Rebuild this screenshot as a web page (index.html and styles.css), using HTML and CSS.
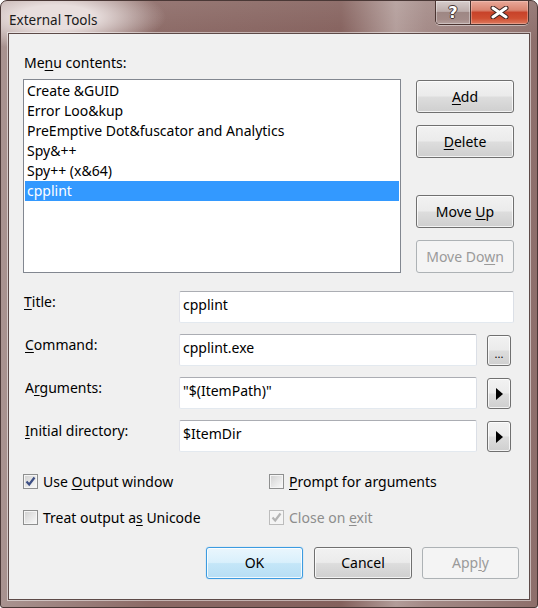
FILE: index.html
```html
<!DOCTYPE html>
<html>
<head>
<meta charset="utf-8">
<link rel="stylesheet" href="styles.css">
</head>
<body>
<div class="window">
  <div class="titlebar">
    <div class="title">External Tools</div>
    <div class="caption">
      <div class="cap help"><span class="qmark">?</span></div>
      <div class="cap close">
        <svg width="19" height="13" viewBox="0 0 19 13">
          <path d="M3 2 L16 11 M16 2 L3 11" stroke="#3a2422" stroke-width="5" stroke-linecap="round"/>
          <path d="M3 2 L16 11 M16 2 L3 11" stroke="#ffffff" stroke-width="3" stroke-linecap="round"/>
        </svg>
      </div>
    </div>
  </div>
  <div class="client">
    <div class="lbl menu-lbl">Me<u>n</u>u contents:</div>
    <div class="top">
      <ul class="listbox">
        <li>Create &amp;GUID</li>
        <li>Error Loo&amp;kup</li>
        <li>PreEmptive Dot&amp;fuscator and Analytics</li>
        <li>Spy&amp;++</li>
        <li>Spy++ (x&amp;64)</li>
        <li class="sel">cpplint</li>
      </ul>
      <div class="side">
        <div class="btn side-btn"><span><u>A</u>dd</span></div>
        <div class="btn side-btn gap-s"><span><u>D</u>elete</span></div>
        <div class="btn side-btn gap-l"><span>Move <u>U</u>p</span></div>
        <div class="btn side-btn gap-s disabled"><span>Move Do<u>w</u>n</span></div>
      </div>
    </div>
    <div class="fields">
      <div class="row">
        <div class="flabel first"><u>T</u>itle:</div>
        <div class="input">cpplint</div>
      </div>
      <div class="row">
        <div class="flabel"><u>C</u>ommand:</div>
        <div class="input">cpplint.exe</div>
        <div class="btn mini"><span class="dots">...</span></div>
      </div>
      <div class="row">
        <div class="flabel">A<u>r</u>guments:</div>
        <div class="input">"$(ItemPath)"</div>
        <div class="btn mini">
          <svg width="7" height="12" viewBox="0 0 7 12"><polygon points="0,0 7,6 0,12" fill="#000"/></svg>
        </div>
      </div>
      <div class="row">
        <div class="flabel"><u>I</u>nitial directory:</div>
        <div class="input">$ItemDir</div>
        <div class="btn mini">
          <svg width="7" height="12" viewBox="0 0 7 12"><polygon points="0,0 7,6 0,12" fill="#000"/></svg>
        </div>
      </div>
    </div>
    <div class="checks">
      <div class="check">
        <div class="cb"><svg width="13" height="13" viewBox="0 0 13 13"><polyline points="2.5,6.5 5.2,9.5 10.5,2.5" fill="none" stroke="#3d4f84" stroke-width="2.2"/></svg></div>
        <span>Use <u>O</u>utput window</span>
      </div>
      <div class="check">
        <div class="cb"></div>
        <span><u>P</u>rompt for arguments</span>
      </div>
      <div class="check">
        <div class="cb"></div>
        <span>Treat output a<u>s</u> Unicode</span>
      </div>
      <div class="check disabled">
        <div class="cb"><svg width="13" height="13" viewBox="0 0 13 13"><polyline points="2.5,6.5 5.2,9.5 10.5,2.5" fill="none" stroke="#b4b4b4" stroke-width="2.2"/></svg></div>
        <span>Close on <u>e</u>xit</span>
      </div>
    </div>
    <div class="actions">
      <div class="btn act default"><span>OK</span></div>
      <div class="btn act cancel"><span>Cancel</span></div>
      <div class="btn act apply disabled"><span>App<u>l</u>y</span></div>
    </div>
  </div>
</div>
</body>
</html>
```

FILE: styles.css
```css
* { box-sizing: border-box; }
html, body { margin: 0; padding: 0; background: #ffffff; }
body {
  font-family: "Noto Sans", "Open Sans", sans-serif;
  font-size: 14px;
  color: #000;
}
u { text-underline-offset: 2px; text-decoration-thickness: 1px; }

.window {
  width: 538px;
  height: 608px;
  border: 1px solid #4a3836;
  border-radius: 7px 7px 3px 3px;
  overflow: hidden;
  display: flex;
  flex-direction: column;
  background:
    radial-gradient(ellipse 110px 34px at 55px 16px, rgba(232,222,221,1) 35%, rgba(232,222,221,0) 100%),
    linear-gradient(to bottom, rgba(255,255,255,0.1), rgba(255,255,255,0) 40px),
    linear-gradient(to right, #a99390 0px, #8b6965 150px, #84605c 340px, #b29c99 395px, #a38986 425px, #8d6e6a 538px);
}

.titlebar {
  height: 32px;
  flex: none;
  display: flex;
  align-items: flex-start;
}
.title {
  flex: 1;
  padding: 9px 0 0 8px;
  font-size: 13.5px;
  line-height: 20px;
  color: #1a1a1a;
}
.caption {
  display: flex;
  width: 94px;
  height: 24px;
  margin-right: 8px;
  border: 1px solid #4a3431;
  border-top: none;
  border-radius: 0 0 5px 5px;
  overflow: hidden;
  box-shadow: 0 1px 0 rgba(255,255,255,0.45);
}
.cap {
  display: flex;
  align-items: center;
  justify-content: center;
  height: 100%;
}
.help {
  width: 35px;
  flex: none;
  border-right: 1px solid #4a3431;
  background: linear-gradient(#d6cdcc 0%, #bcadab 45%, #9e8784 50%, #a38b88 80%, #b5a19e 100%);
  box-shadow: inset 0 0 0 1px rgba(255,255,255,0.35);
}
.qmark {
  font-family: "DejaVu Sans", sans-serif;
  font-weight: bold;
  font-size: 16px;
  line-height: 16px;
  color: #ffffff;
  text-shadow: 0 0 1px #3a2a28, 1px 0 0 #4a3634, -1px 0 0 #4a3634, 0 1px 0 #4a3634, 0 -1px 0 #4a3634;
}
.close {
  flex: 1;
  background: linear-gradient(#e8a99a 0%, #d98470 40%, #c8432a 50%, #cf4e31 75%, #dd7a5f 100%);
  box-shadow: inset 0 0 0 1px rgba(255,220,210,0.35);
}

.client {
  flex: none;
  margin: 0 7px;
  height: 567px;
  background: #f0f0f0;
  border: 1px solid #5d4a48;
  box-shadow: 0 0 0 1px rgba(255,255,255,0.5);
  padding: 19px 15px 0 14px;
}

.lbl { line-height: 20px; }
.menu-lbl { padding-left: 1px; margin-bottom: 6px; }

.top {
  display: flex;
  gap: 15px;
  align-items: flex-start;
}
.listbox {
  width: 378px;
  height: 194px;
  flex: none;
  margin: 0;
  padding: 1px;
  list-style: none;
  background: #ffffff;
  border: 1px solid #828790;
}
.listbox li {
  height: 20px;
  line-height: 20px;
  padding-left: 2px;
  white-space: nowrap;
}
.listbox li.sel { background: #3399ff; color: #ffffff; }

.side {
  width: 98px;
  flex: none;
  display: flex;
  flex-direction: column;
  padding-top: 1px;
}

.btn {
  display: flex;
  align-items: center;
  justify-content: center;
  flex: none;
  border: 1px solid #707070;
  border-radius: 3px;
  background: linear-gradient(#f2f2f2 0%, #ebebeb 48%, #dddddd 52%, #cfcfcf 100%);
  box-shadow: inset 0 0 0 1px rgba(255,255,255,0.75);
  line-height: 20px;
  color: #000;
}
.btn.disabled {
  border-color: #adb2b5;
  background: #f4f4f4;
  box-shadow: none;
  color: #9a9a9a;
}
.btn.default {
  border-color: #3c9be0;
  background: linear-gradient(#eaf6fd 0%, #d9f0fc 48%, #c4e6f8 52%, #b7def4 100%);
  box-shadow: inset 0 0 0 1px rgba(255,255,255,0.8), 0 0 1px #5fb4f0;
}
.side-btn { height: 33px; }
.gap-s { margin-top: 12px; }
.gap-l { margin-top: 37px; }

.fields {
  margin-top: 18px;
  display: flex;
  flex-direction: column;
  gap: 11px;
}
.row {
  display: flex;
  align-items: flex-start;
  height: 32px;
}
.flabel {
  width: 156px;
  flex: none;
  padding-left: 2px;
  line-height: 20px;
  padding-top: 1px;
}
.flabel.first { padding-left: 1px; }
.input {
  flex: 1;
  height: 32px;
  background: #ffffff;
  border: 1px solid;
  border-color: #abadb3 #dbdfe6 #e3e9ef #e2e3ea;
  border-radius: 2px;
  padding: 3px 3px 0 3px;
  line-height: 20px;
  white-space: nowrap;
}
.mini {
  width: 24px;
  height: 31px;
  margin: 1px 3px 0 10px;
}
.dots {
  font-size: 11px;
  line-height: 11px;
  padding-top: 6px;
}

.checks {
  margin-top: 19px;
  display: grid;
  grid-template-columns: 246px 1fr;
  row-gap: 16px;
}
.check {
  display: flex;
  align-items: center;
  height: 20px;
  gap: 5px;
}
.cb {
  width: 15px;
  height: 15px;
  border: 1px solid #8e8f8f;
  background: linear-gradient(135deg, #cfcfcf 0%, #e6e6e6 50%, #fafafa 100%);
  box-shadow: inset 0 0 0 1px #f5f5f5;
  display: flex;
  align-items: center;
  justify-content: center;
  flex: none;
}
.check.disabled .cb {
  border-color: #bcbcbc;
  background: #f4f4f4;
}
.check.disabled span { color: #8d8d8d; }

.actions {
  margin-top: 20px;
  margin-right: -6px;
  display: flex;
  padding-left: 183px;
}
.act { height: 32px; }
.default { width: 97px; }
.cancel { width: 98px; margin-left: 11px; }
.apply { width: 97px; margin-left: 10px; }
```
